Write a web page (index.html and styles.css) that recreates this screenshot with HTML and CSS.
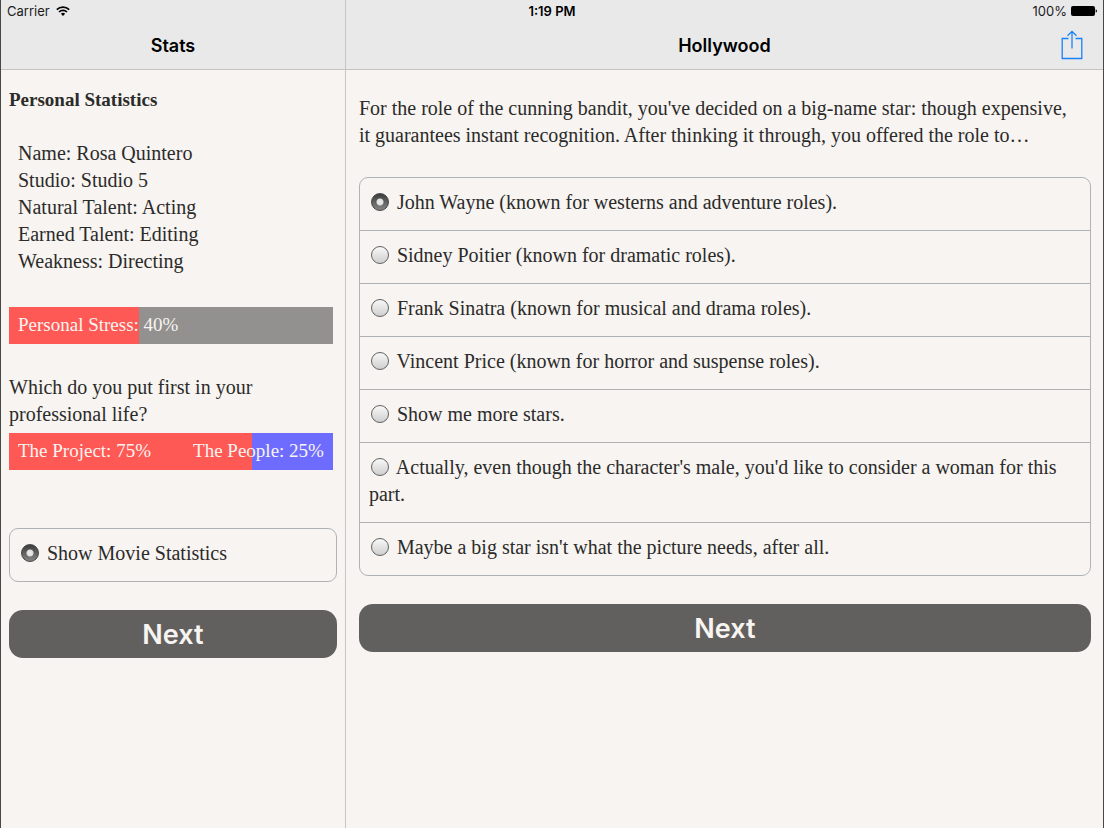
FILE: index.html
```html
<!DOCTYPE html>
<html lang="en">
<head>
  <meta charset="UTF-8" />
  <meta name="viewport" content="width=device-width, initial-scale=1" />
  <title>Hollywood</title>
  <link rel="stylesheet" href="styles.css">
</head>
<body>
  <div class="status-bar">
    <div class="carrier">
      <span>Carrier</span>
      <svg class="wifi" viewBox="0 0 14 10" aria-hidden="true">
        <path d="M0.8 3.6a9 9 0 0 1 12.4 0M3 6a5.8 5.8 0 0 1 8 0" fill="none" stroke="#000" stroke-width="1.7" />
        <path d="M7 10L4.9 7.8a3 3 0 0 1 4.2 0z" />
      </svg>
    </div>
    <div class="time">1:19 PM</div>
    <div class="power">
      <span>100%</span>
      <svg class="battery" viewBox="0 0 26 10" aria-hidden="true">
        <rect x="0" y="0" width="24" height="10" rx="2" />
        <path d="M24.7 3.2q1.3 0.5 1.3 1.8t-1.3 1.8z" />
      </svg>
    </div>
  </div>

  <div class="split">
    <section class="pane stats">
      <header class="navbar">
        <h1>Stats</h1>
      </header>
      <div class="content">
        <h2>Personal Statistics</h2>
        <ul class="facts">
          <li>Name: Rosa Quintero</li>
          <li>Studio: Studio 5</li>
          <li>Natural Talent: Acting</li>
          <li>Earned Talent: Editing</li>
          <li>Weakness: Directing</li>
        </ul>

        <div class="bar">
          <div class="fill" style="width: 40%"></div>
          <span>Personal Stress: 40%</span>
        </div>

        <p class="question">Which do you put first in your professional life?</p>
        <div class="bar opposed">
          <div class="fill" style="width: 75%"></div>
          <span>The Project: 75%</span>
          <span>The People: 25%</span>
        </div>

        <form>
          <div class="choices">
            <label><input type="radio" name="stat" checked> Show Movie Statistics</label>
          </div>
          <button type="button" class="next">Next</button>
        </form>
      </div>
    </section>

    <main class="pane story">
      <header class="navbar">
        <h1>Hollywood</h1>
        <button type="button" class="share" aria-label="Share">
          <svg viewBox="0 0 22 30" aria-hidden="true">
            <path d="M7.5 8.5H1.2v20h19.6v-20H14.5M11 18.5V1.5M6.5 5.8L11 1.3l4.5 4.5" fill="none" stroke="#1a82fb" stroke-width="1.3" />
          </svg>
        </button>
      </header>
      <div class="content">
        <p class="prose">For the role of the cunning bandit, you've decided on a big-name star: though expensive, it guarantees instant recognition. After thinking it through, you offered the role to…</p>
        <form>
          <div class="choices">
            <label><input type="radio" name="star" checked> John Wayne (known for westerns and adventure roles).</label>
            <label><input type="radio" name="star"> Sidney Poitier (known for dramatic roles).</label>
            <label><input type="radio" name="star"> Frank Sinatra (known for musical and drama roles).</label>
            <label><input type="radio" name="star"> Vincent Price (known for horror and suspense roles).</label>
            <label><input type="radio" name="star"> Show me more stars.</label>
            <label><input type="radio" name="star"> Actually, even though the character's male, you'd like to consider a woman for this part.</label>
            <label><input type="radio" name="star"> Maybe a big star isn't what the picture needs, after all.</label>
          </div>
          <button type="button" class="next">Next</button>
        </form>
      </div>
    </main>
  </div>
</body>
</html>
```
FILE: styles.css
```css
* {
  box-sizing: border-box;
  margin: 0;
  padding: 0;
}
body {
  position: relative;
  min-height: 100vh;
  background-color: #f7f4f1;
  border: solid #4a4747;
  border-width: 0 1px;
  color: #2b2b2a;
  font-family: Palatino, "Liberation Serif", serif;
  font-size: 20px;
  line-height: 27px;
}
.status-bar {
  position: absolute;
  z-index: 1;
  top: 0;
  left: 0;
  right: 0;
  display: grid;
  grid-template-columns: 1fr auto 1fr;
  align-items: center;
  height: 22px;
  padding: 0 6px;
  color: #1c1c1c;
  font-family: Inter, sans-serif;
  font-size: 13px;
  line-height: 22px;
}
.carrier, .power {
  display: flex;
  align-items: center;
  gap: 6px;
}
.power {
  justify-content: flex-end;
  gap: 4px;
}
.time {
  font-weight: 600;
  color: #000;
}
.wifi {
  width: 14px;
  height: 10px;
}
.battery {
  width: 26px;
  height: 10px;
}
.split {
  display: grid;
  grid-template-columns: 31.3% minmax(0, 1fr);
  min-height: 100vh;
}
.stats {
  border-right: 1px solid #c6c4c4;
}
.navbar {
  display: flex;
  align-items: center;
  justify-content: center;
  position: relative;
  height: 70px;
  padding-top: 22px;
  background-color: #e9e9ea;
  border-bottom: 1px solid #c4c3c4;
}
.navbar h1 {
  font-family: Inter, sans-serif;
  font-size: 18px;
  font-weight: 600;
  color: #000;
}
.share {
  position: absolute;
  right: 20px;
  top: 30px;
  width: 22px;
  height: 30px;
  border: none;
  background: none;
  cursor: pointer;
}
.share svg {
  display: block;
  width: 22px;
  height: 30px;
}
.stats .content {
  padding: 16px 8px;
}
.story .content {
  padding: 25px 12px 25px 13px;
}
h2 {
  font-size: 19px;
  font-weight: 700;
  margin-bottom: 27px;
}
.facts {
  list-style: none;
  padding-left: 9px;
  margin-bottom: 32px;
}
.bar {
  position: relative;
  display: flex;
  justify-content: space-between;
  height: 37px;
  margin-right: 4px;
  padding: 4px 9px;
  background-color: #92918f;
  color: #f7f4f1;
  font-size: 19px;
}
.bar span {
  position: relative;
}
.fill {
  position: absolute;
  top: 0;
  left: 0;
  height: 100%;
  background-color: #ff5955;
}
.opposed {
  background-color: #6e6cff;
  margin-bottom: 58px;
}
.question {
  margin-top: 30px;
  margin-bottom: 5px;
}
.prose {
  padding-right: 12px;
  margin-bottom: 28px;
}
.choices {
  border: 1px solid #b0b3b5;
  border-radius: 9px;
  margin-bottom: 28px;
}
.choices label {
  display: block;
  padding: 11px 9px 14px;
  cursor: pointer;
}
.choices label + label {
  border-top: 1px solid #b0b3b5;
}
.choices input {
  appearance: none;
  width: 18px;
  height: 18px;
  margin: 0 3px 0 2px;
  vertical-align: -2px;
  border: 1px solid #626262;
  border-radius: 50%;
  background: linear-gradient(#f8f8f8, #cfcfcf);
}
.choices input:checked {
  border-color: #444;
  background: radial-gradient(circle, #eee 0, #ddd 3px, transparent 4px), linear-gradient(#3c3c3c, #858585);
}
.next {
  display: block;
  width: 100%;
  height: 48px;
  border: none;
  border-radius: 14px;
  background-color: #61605e;
  color: #f7f4f1;
  font-family: Inter, sans-serif;
  font-size: 27px;
  font-weight: 600;
  cursor: pointer;
}
@media (max-width: 640px) {
  .split {
    grid-template-columns: 1fr;
  }
  .stats {
    border-right: none;
  }
}
```
